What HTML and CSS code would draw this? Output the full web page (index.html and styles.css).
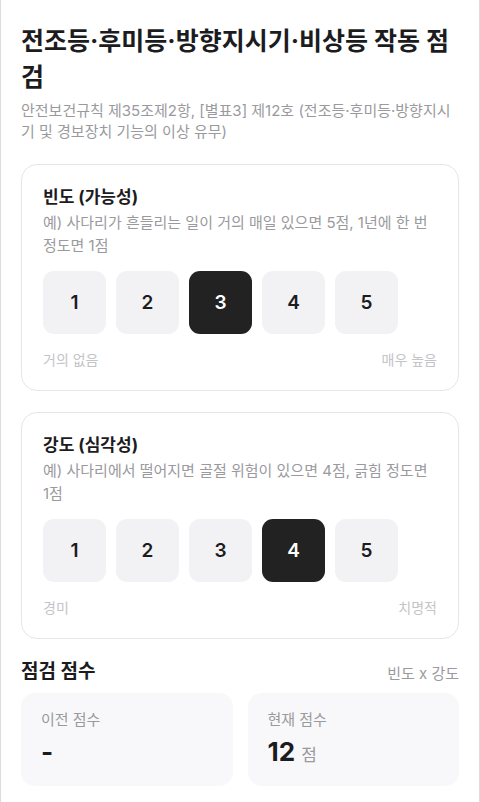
FILE: index.html
```html
<!DOCTYPE html>
<html lang="ko">
<head>
    <meta charset="UTF-8">
    <meta name="viewport" content="width=device-width, initial-scale=1.0">
    <title>작동 점검</title>
    <link rel="stylesheet" href="styles.css">
</head>
<body>
    <div class="page">
        <h1 class="page_title">전조등·후미등·방향지시기·비상등 작동 점검</h1>
        <p class="page_sub">안전보건규칙 제35조제2항, [별표3] 제12호 (전조등·후미등·방향지시기 및 경보장치 기능의 이상 유무)</p>

        <div class="rate_card">
            <h2>빈도 (가능성)</h2>
            <p class="rate_desc">예) 사다리가 흔들리는 일이 거의 매일 있으면 5점, 1년에 한 번 정도면 1점</p>
            <div class="rate_row">
                <button class="rate_btn">1</button>
                <button class="rate_btn">2</button>
                <button class="rate_btn active">3</button>
                <button class="rate_btn">4</button>
                <button class="rate_btn">5</button>
            </div>
            <div class="rate_labels">
                <span>거의 없음</span>
                <span>매우 높음</span>
            </div>
        </div>

        <div class="rate_card">
            <h2>강도 (심각성)</h2>
            <p class="rate_desc">예) 사다리에서 떨어지면 골절 위험이 있으면 4점, 긁힘 정도면 1점</p>
            <div class="rate_row">
                <button class="rate_btn">1</button>
                <button class="rate_btn">2</button>
                <button class="rate_btn">3</button>
                <button class="rate_btn active">4</button>
                <button class="rate_btn">5</button>
            </div>
            <div class="rate_labels">
                <span>경미</span>
                <span>치명적</span>
            </div>
        </div>

        <div class="score_head">
            <h2>점검 점수</h2>
            <span>빈도 x 강도</span>
        </div>
        <div class="score_grid">
            <div class="score_box">
                <p class="score_label">이전 점수</p>
                <p class="score_value">-</p>
            </div>
            <div class="score_box">
                <p class="score_label">현재 점수</p>
                <p class="score_value">12 <small>점</small></p>
            </div>
        </div>
    </div>
</body>
</html>
```

FILE: styles.css
```css
:root {
    --text-dark: #1c1c1e;
    --text-gray: #9a9a9e;
    --text-light: #c4c4c7;
    --line: #e6e6e8;
    --btn-bg: #f2f2f5;
}

body {
    margin: 0;
    padding: 0;
    background: white;
    font-family: Inter, "Noto Sans CJK KR", sans-serif;
    color: var(--text-dark);
}

.page {
    border-left: 1px solid #dcdcde;
    border-right: 1px solid #dcdcde;
    padding: 23px 20px 20px;
    min-height: 780px;
}

.page_title {
    font-size: 25px;
    font-weight: 700;
    line-height: 36px;
    margin: 0;
}

.page_sub {
    font-size: 15px;
    line-height: 21px;
    color: var(--text-gray);
    margin: 5px 0 0;
}

.rate_card {
    border: 1px solid var(--line);
    border-radius: 16px;
    padding: 20px 21px 20px;
    margin-top: 21px;
}

.page_sub + .rate_card {
    margin-top: 22px;
}

.rate_card h2 {
    font-size: 17px;
    font-weight: 700;
    line-height: 24px;
    margin: 0;
}

.rate_desc {
    font-size: 15px;
    line-height: 23px;
    color: var(--text-gray);
    margin: 2px 0 0;
}

.rate_row {
    display: flex;
    gap: 10px;
    margin-top: 14px;
}

.rate_btn {
    width: 63px;
    height: 63px;
    border: none;
    border-radius: 11px;
    background: var(--btn-bg);
    font-family: Inter, sans-serif;
    font-size: 19px;
    font-weight: 600;
    color: var(--text-dark);
    padding: 0;
}

.rate_btn.active {
    background: #222222;
    color: white;
}

.rate_labels {
    display: flex;
    justify-content: space-between;
    font-size: 14px;
    line-height: 20px;
    color: var(--text-light);
    margin-top: 16px;
}

.score_head {
    display: flex;
    justify-content: space-between;
    align-items: center;
    margin-top: 20px;
}

.score_head h2 {
    font-size: 19px;
    font-weight: 700;
    margin: 0;
    line-height: 26px;
}

.score_head span {
    font-size: 15px;
    color: var(--text-gray);
}

.score_grid {
    display: grid;
    grid-template-columns: 1fr 1fr;
    gap: 15px;
    margin-top: 8px;
}

.score_box {
    background: #f8f8fa;
    border-radius: 14px;
    padding: 16px 20px 20px;
    height: 93px;
    box-sizing: border-box;
}

.score_label {
    font-size: 15px;
    line-height: 22px;
    color: var(--text-gray);
    margin: 0;
}

.score_value {
    font-size: 26px;
    font-weight: 700;
    line-height: 34px;
    margin: 4px 0 0;
}

.score_value small {
    font-size: 17px;
    font-weight: 400;
    color: var(--text-gray);
}
```
